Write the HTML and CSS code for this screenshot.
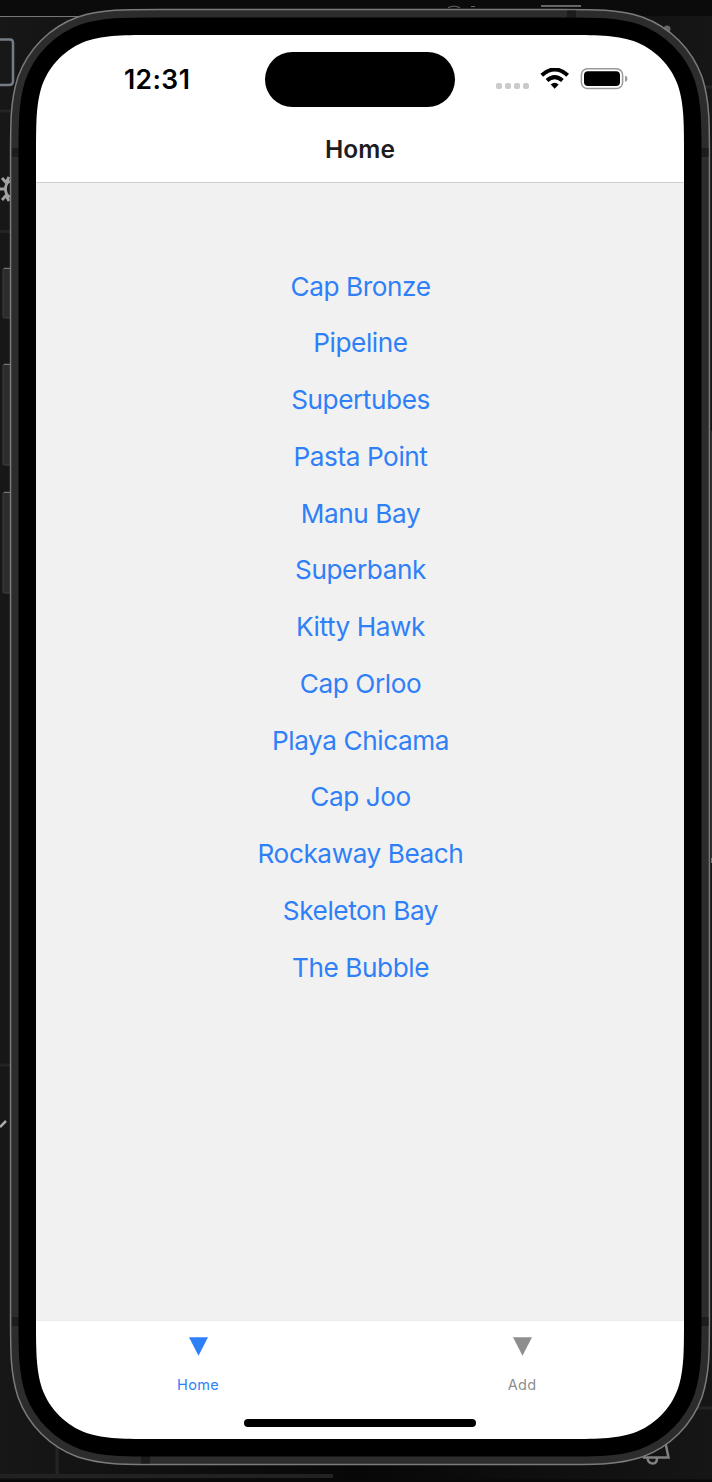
FILE: index.html
```html
<!DOCTYPE html>
<html lang="en">
<head>
<meta charset="utf-8">
<title>Home</title>
<link rel="stylesheet" href="styles.css">
</head>
<body>
<div class="desktop">
  <svg class="backdrop" viewBox="0 0 712 1482" aria-hidden="true">
    <defs>
      <linearGradient id="desk" x1="0" y1="0" x2="1" y2="0"><stop offset="0" stop-color="#171717"/><stop offset=".5" stop-color="#070707"/><stop offset="1" stop-color="#161616"/></linearGradient>
      <path id="screen" d="M36 157.3c0-35.2 0-52.8 6-71.8c7.5-20.7 23.8-37 44.5-44.5c19-6 36.6-6 71.8-6H561.7c35.2 0 52.8 0 71.8 6c20.7 7.5 37 23.8 44.5 44.5c6 19 6 36.6 6 71.8V1316.7c0 35.2 0 52.8-6 71.8c-7.5 20.7-23.8 37-44.5 44.5c-19 6-36.6 6-71.8 6H158.3c-35.2 0-52.8 0-71.8-6c-20.7-7.5-37-23.8-44.5-44.5c-6-19-6-36.6-6-71.8z"/>
    </defs>
    <rect width="712" height="1482" fill="url(#desk)"/>
    <rect width="712" height="16" fill="#0b0b0b"/>
    <!-- window edges behind the device -->
    <path d="M0 16.500H90" stroke="#777"/>
    <path d="M0 111H12M0 231.500H12M0 1065H10M700 87H712M690 1408H712M57 1440V1474" stroke="#242424" stroke-width="3"/>
    <path d="M0 1476H333" stroke="#222" stroke-width="4"/><path d="M0 1481H712" stroke="#080808" stroke-width="3"/>
    <path d="M0 39.500H10Q13 39.500 13 43V81Q13 85 9 85H0" fill="#181818" stroke="#747c86" stroke-width="2.500"/>
    <path d="M0 189H5M10 181Q5.500 183 5.500 189Q5.500 195 10 197M2 178L6 182.500L9 177M2 200L6 195.500L9 201" fill="none" stroke="#a2a2a2" stroke-width="2.800"/>
    <path d="M0 1127L6 1121" stroke="#aaa" stroke-width="2.500"/>
    <path d="M541 6H581" stroke="#666" stroke-width="2"/>
    <path d="M448 7.500Q454 4.500 460 7.500" fill="none" stroke="#666"/><path d="M471 6.500H475" stroke="#666"/>
    <circle cx="667" cy="29" r="3.500" fill="#666"/>
    <path d="M643 1457.500H668.500L665.500 1443M647.500 1458Q648 1463.500 653 1463.500Q657 1463.500 657 1458" fill="none" stroke="#808080" stroke-width="2.500"/>
    <path d="M711.500 431V862" stroke="#303030"/>
    <path d="M711.500 858V863" stroke="#777"/>
    <!-- side buttons -->
    <g fill="#2c2c2c" stroke="#414141" stroke-width="1">
      <rect x="3" y="268" width="12" height="50" rx="1.500"/><rect x="3" y="364" width="12" height="101" rx="1.500"/><rect x="3" y="492" width="12" height="101" rx="1.500"/>
    </g>
    <path d="M4 268.500H11M4 364.500H11M4 492.500H11" stroke="#777"/>
    <!-- device shell, from the outer rim inwards -->
    <use href="#screen" fill="none" stroke="#7b7b7b" stroke-width="52.400"/>
    <use href="#screen" fill="none" stroke="#2c2c2c" stroke-width="49.400"/>
    <path d="M12 152.500H20M701 152.500H708.500M12 1321.500H20M701 1321.500H708.500" stroke="#1c1c1c" stroke-width="9"/>
    <path d="M571.500 10.500V18M145.500 1456V1463.500" stroke="#1c1c1c" stroke-width="9"/>
    <use href="#screen" fill="#fff" stroke="#000" stroke-width="35"/>
    <use href="#screen" fill="#fff"/>
  </svg>
  <main class="screen">
    <header class="topbar">
      <div class="status">
        <time class="clock">12:31</time>
        <span class="island"></span>
        <svg class="signals" width="132" height="24" viewBox="0 0 132 24" aria-hidden="true">
          <g fill="#cacaca"><rect y="15" width="6" height="6" rx="2"/><rect x="9" y="15" width="6" height="6" rx="2"/><rect x="18" y="15" width="6" height="6" rx="2"/><rect x="27" y="15" width="6" height="6" rx="2"/></g>
          <g fill="none" stroke="#000" stroke-width="4"><path d="M45.700 7.200Q58.700-4.200 71.700 7.200"/><path d="M51 12.600Q58.700 5.800 66.400 12.600"/></g>
          <path d="M54.700 16.500Q58.700 13 62.700 16.500L58.700 20.700Z"/>
          <rect x="85.400" y=".8" width="41.200" height="19.800" rx="6" fill="none" stroke="#999" stroke-width="1.500"/>
          <rect x="88" y="3.300" width="36" height="14.800" rx="4"/>
          <path d="M129 7.500Q131.500 8.500 131.500 10.700Q131.500 13 129 14Z" fill="#999"/>
        </svg>
      </div>
      <h1 class="title">Home</h1>
    </header>
    <nav class="spots">
      <a>Cap Bronze</a><a>Pipeline</a><a>Supertubes</a><a>Pasta Point</a><a>Manu Bay</a><a>Superbank</a><a>Kitty Hawk</a><a>Cap Orloo</a><a>Playa Chicama</a><a>Cap Joo</a><a>Rockaway Beach</a><a>Skeleton Bay</a><a>The Bubble</a>
    </nav>
    <footer class="bottom">
      <div class="tabs">
        <div class="tab active"><svg width="19" height="19" viewBox="0 0 19 19"><path d="M0 .3H19L9.500 18.800Z" fill="currentColor"/></svg><span>Home</span></div>
        <div class="tab"><svg width="19" height="19" viewBox="0 0 19 19"><path d="M0 .3H19L9.500 18.800Z" fill="currentColor"/></svg><span>Add</span></div>
      </div>
      <span class="indicator"></span>
    </footer>
  </main>
</div>
</body>
</html>
```
FILE: styles.css
```css
* { box-sizing: border-box; }
body { margin: 0; background: #111; font-family: Inter, "Liberation Sans", sans-serif; }
.desktop { position: relative; width: 712px; height: 1482px; padding: 35px 28px 43px 36px; overflow: hidden; }
.backdrop { position: absolute; inset: 0; width: 712px; height: 1482px; }
.screen { position: relative; height: 1404px; display: flex; flex-direction: column; }
.topbar { height: 148px; border-bottom: 1px solid #cfcfcf; }
.status { display: grid; grid-template-columns: 229px 190px 229px; height: 89px; align-items: center; }
.clock { padding: 0 0 2px 88px; font-size: 26.5px; line-height: 32px; font-weight: 600; letter-spacing: .4px; white-space: nowrap; color: #000; }
.island { height: 55px; border-radius: 28px; background: #000; }
.signals { display: block; margin-left: 41px; }
.title { margin: 10px 0 0; text-align: center; font-size: 24.5px; line-height: 30px; font-weight: 600; letter-spacing: .1px; color: #1d1d1f; }
.spots { flex: 1; display: flex; flex-direction: column; align-items: center; background: #f1f1f1; padding-top: 75.5px; border-bottom: 1px solid #ebebeb; color: #2f80f7; }
.spots a { height: 56.75px; line-height: 56.75px; font-size: 26.2px; letter-spacing: -.43px; padding-left: 1px; }
.bottom { height: 118px; display: flex; flex-direction: column; align-items: center; justify-content: space-between; padding: 16px 0 12px; }
.tabs { display: grid; grid-template-columns: 1fr 1fr; width: 100%; }
.tab { display: flex; flex-direction: column; align-items: center; gap: 19px; color: #8e8e8f; font-size: 14.5px; line-height: 20px; letter-spacing: .3px; }
.tab svg { display: block; }
.active { color: #2f80f7; }
.indicator { width: 232px; height: 8px; border-radius: 4px; background: #000; }
```
